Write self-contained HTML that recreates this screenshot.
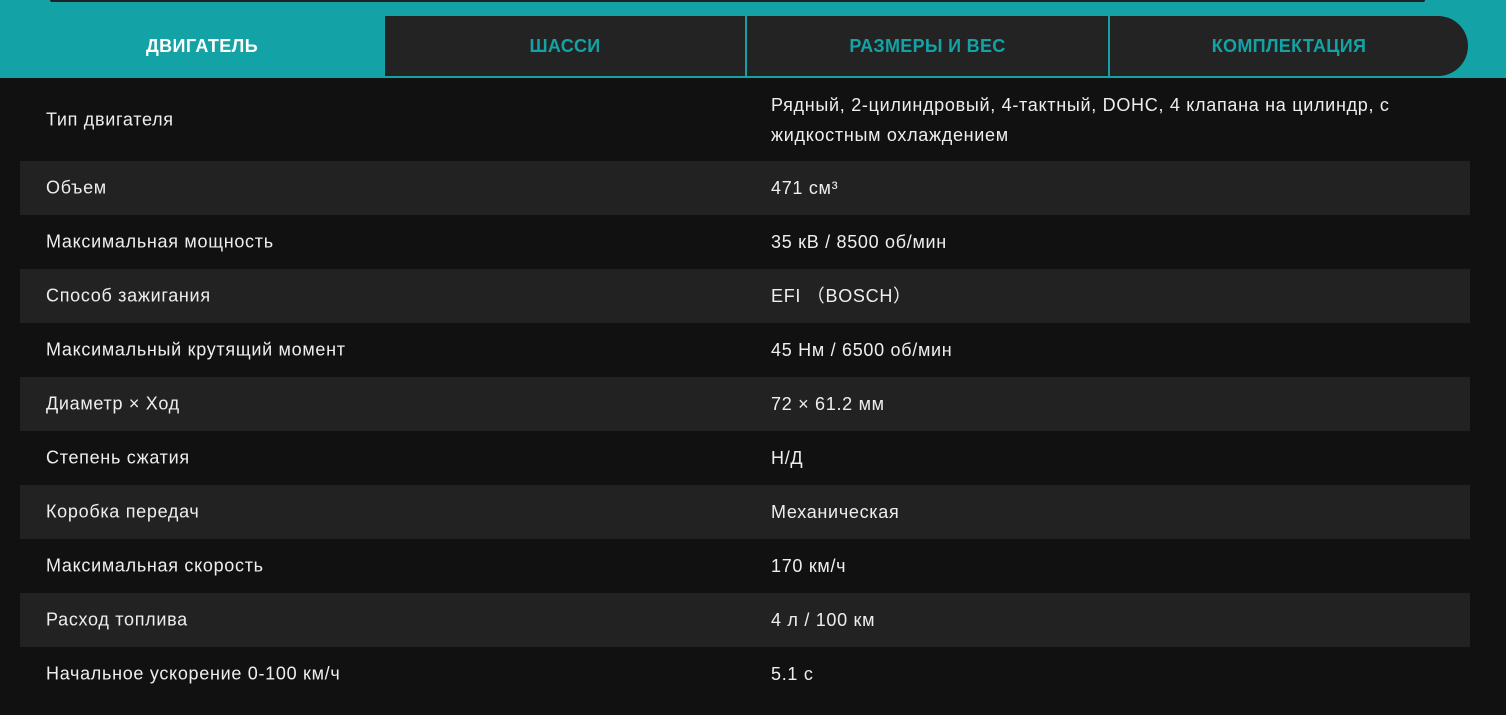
<!DOCTYPE html>
<html><head><meta charset="utf-8"><style>
*{margin:0;padding:0;box-sizing:border-box}
body{width:1506px;height:715px;background:#111;font-family:"Liberation Sans",sans-serif;overflow:hidden;position:relative}
.top{position:absolute;left:0;top:0;width:1506px;height:78px;background:#13a3a6}
.topbar{position:absolute;left:50px;top:0;width:1375px;height:2px;background:#1d2324;border-radius:0 0 8px 8px}
.tab{position:absolute;top:16px;height:60px;background:#232323;color:#13a3a6;font-weight:bold;font-size:18px;letter-spacing:0.3px;display:flex;align-items:center;justify-content:center}
.act{position:absolute;left:20px;top:16px;width:364px;height:60px;color:#fff;font-weight:bold;font-size:18px;letter-spacing:0.4px;display:flex;align-items:center;justify-content:center}
.row{position:absolute;left:20px;width:1450px;height:54px;font-size:18px;letter-spacing:0.7px;color:#eee}
.row.s{background:#222}
.row .l{position:absolute;left:26px;top:50%;transform:translateY(-50%);white-space:nowrap}
.row .v{position:absolute;left:751px;top:50%;transform:translateY(-50%);line-height:30px;white-space:nowrap}
</style></head><body>
<div class="top"></div><div class="topbar"></div>
<div class="act">ДВИГАТЕЛЬ</div>
<div class="tab" style="left:385px;width:360px">ШАССИ</div>
<div class="tab" style="left:747px;width:361px">РАЗМЕРЫ И ВЕС</div>
<div class="tab" style="left:1110px;width:358px;border-radius:0 30px 30px 0">КОМПЛЕКТАЦИЯ</div>
<div class="row" style="top:78px;height:83px"><span class="l">Тип двигателя</span><span class="v">Рядный, 2-цилиндровый, 4-тактный, DOHC, 4 клапана на цилиндр, с<br>жидкостным охлаждением</span></div>
<div class="row s" style="top:161px"><span class="l">Объем</span><span class="v">471 см³</span></div>
<div class="row" style="top:215px"><span class="l">Максимальная мощность</span><span class="v">35 кВ / 8500 об/мин</span></div>
<div class="row s" style="top:269px"><span class="l">Способ зажигания</span><span class="v">EFI （BOSCH）</span></div>
<div class="row" style="top:323px"><span class="l">Максимальный крутящий момент</span><span class="v">45 Нм / 6500 об/мин</span></div>
<div class="row s" style="top:377px"><span class="l">Диаметр × Ход</span><span class="v">72 × 61.2 мм</span></div>
<div class="row" style="top:431px"><span class="l">Степень сжатия</span><span class="v">Н/Д</span></div>
<div class="row s" style="top:485px"><span class="l">Коробка передач</span><span class="v">Механическая</span></div>
<div class="row" style="top:539px"><span class="l">Максимальная скорость</span><span class="v">170 км/ч</span></div>
<div class="row s" style="top:593px"><span class="l">Расход топлива</span><span class="v">4 л / 100 км</span></div>
<div class="row" style="top:647px"><span class="l">Начальное ускорение 0-100 км/ч</span><span class="v">5.1 с</span></div>
</body></html>
